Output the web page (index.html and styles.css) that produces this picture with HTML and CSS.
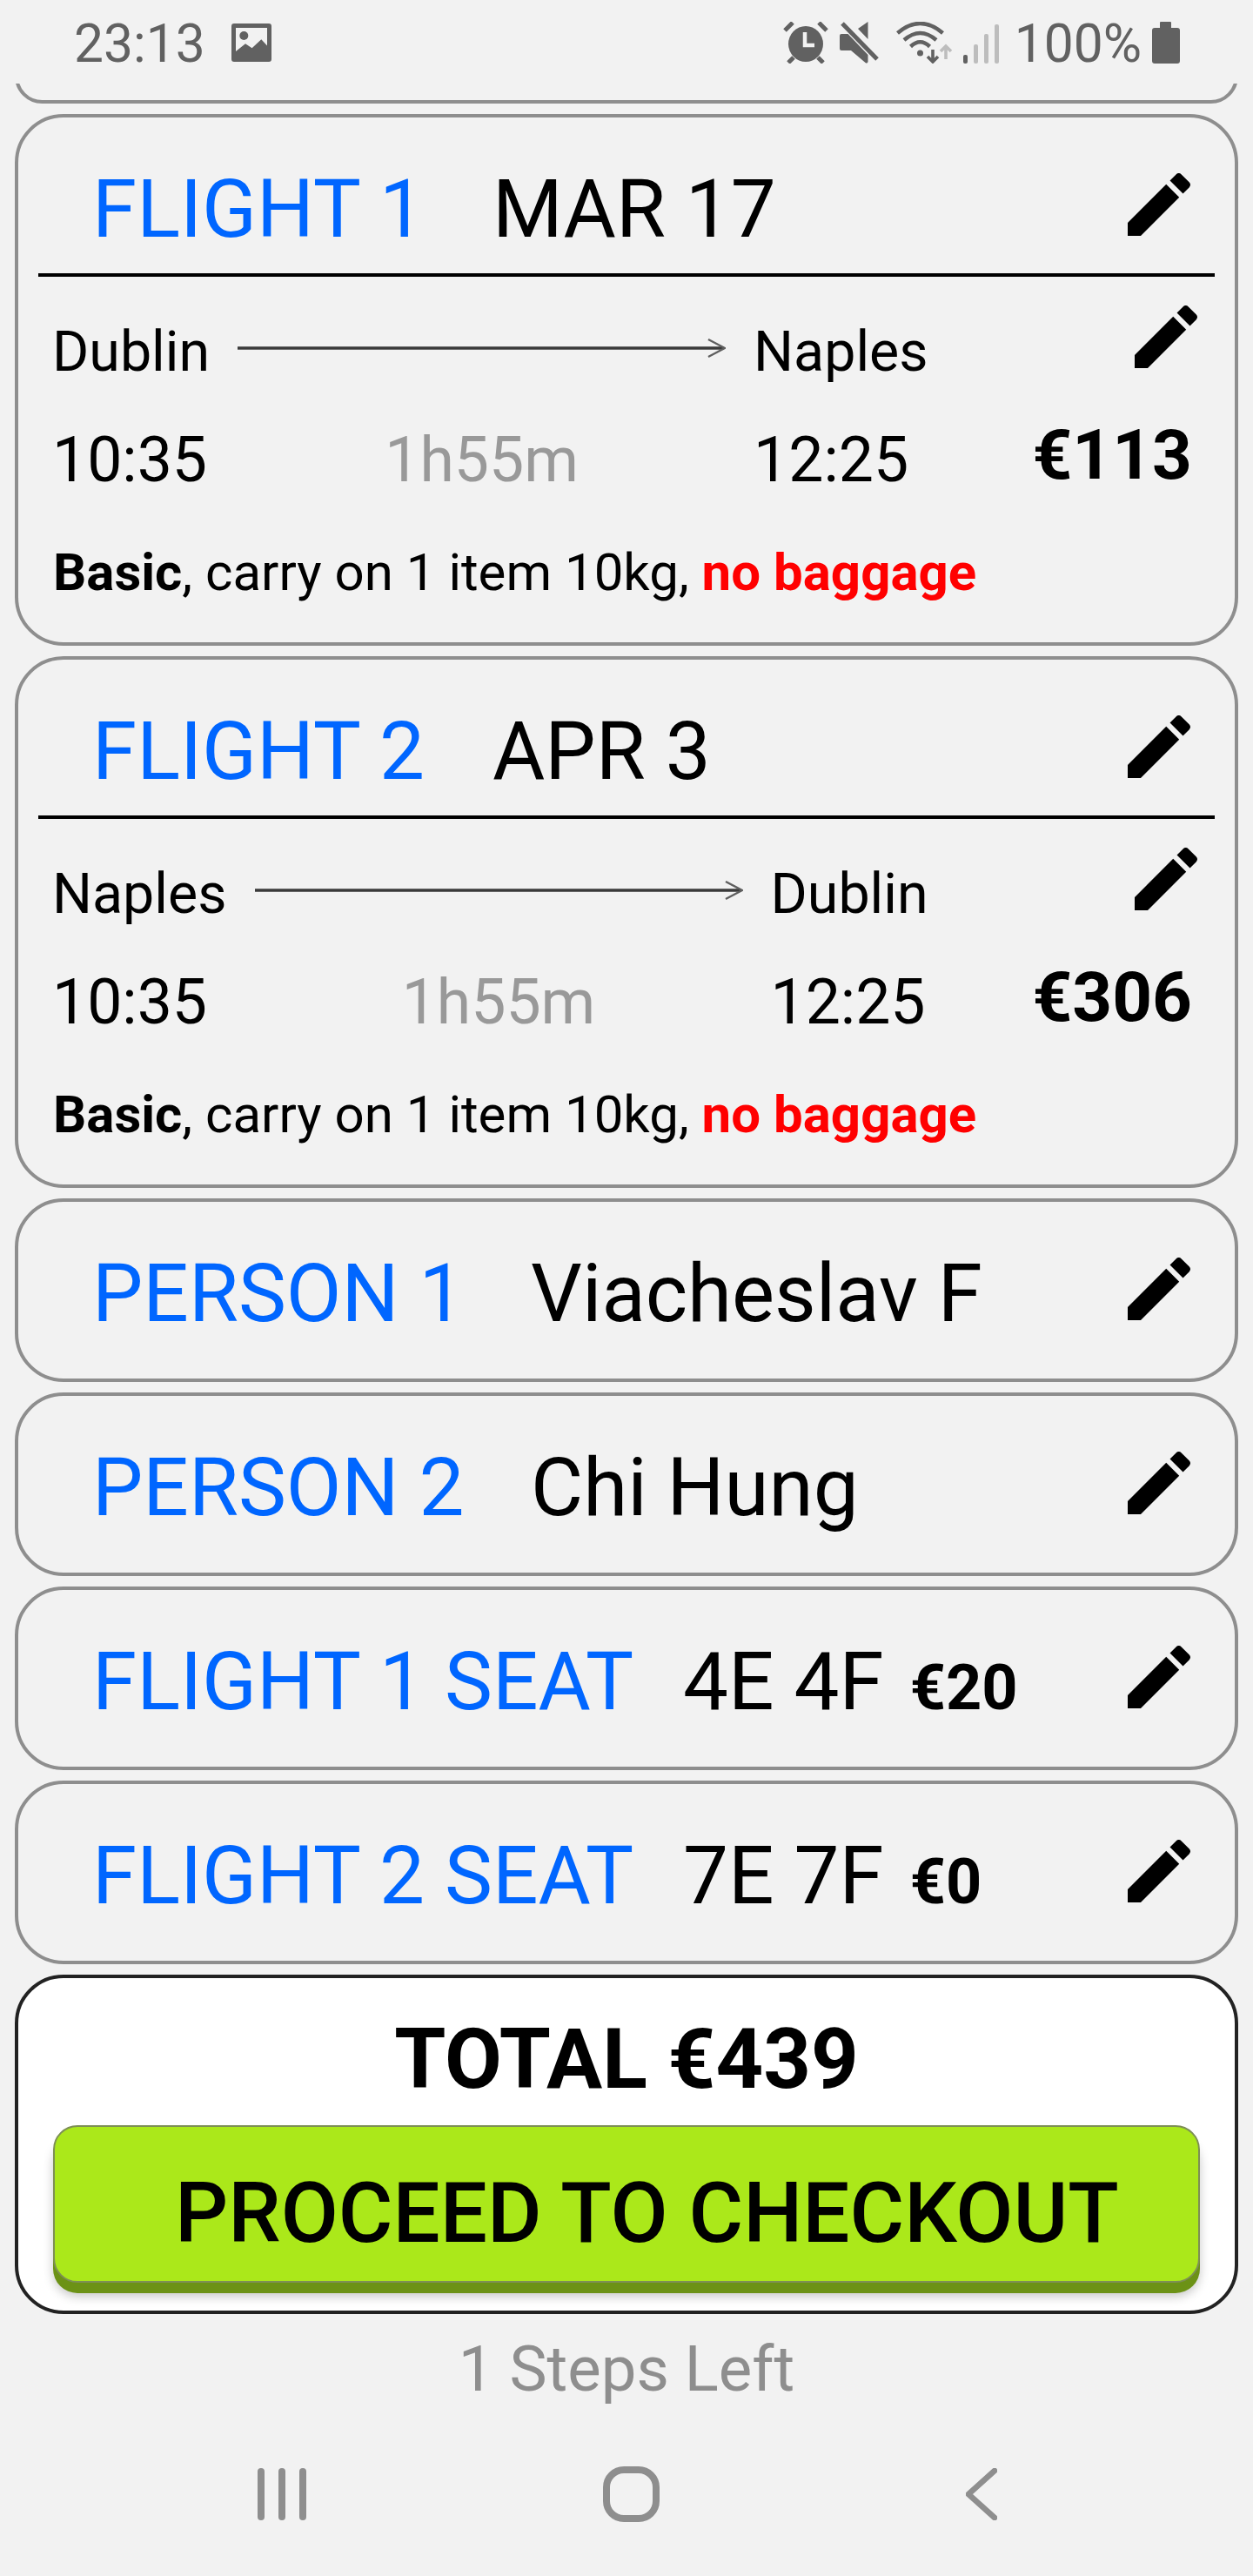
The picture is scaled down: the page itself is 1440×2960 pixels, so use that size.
FILE: index.html
```html
<!DOCTYPE html>
<html lang="en">
<head>
<meta charset="utf-8">
<title>Booking summary</title>
<link rel="stylesheet" href="styles.css">
</head>
<body>
<svg class="sprite" width="0" height="0" aria-hidden="true">
  <symbol id="edit" viewBox="3 3 18 18"><path d="M3 17.25V21h3.75L17.81 9.94l-3.75-3.75L3 17.25zM20.71 7.04c.39-.39.39-1.02 0-1.41l-2.34-2.34c-.39-.39-1.02-.39-1.41 0l-1.83 1.83 3.75 3.75 1.83-1.83z"/></symbol>
  <symbol id="arrow" viewBox="0 0 561 24"><path d="M0 12H559" fill="none" stroke="#3a3a3a" stroke-width="3.6"/><path d="M541 2L560 12L541 22" fill="none" stroke="#5f5f5f" stroke-width="2.4"/></symbol>
</svg>

<header class="status">
  <span class="clock">23:13</span>
  <svg class="ic-image" viewBox="0 0 46 44"><path fill="#616161" fill-rule="evenodd" d="M3 0H43a3 3 0 0 1 3 3V41a3 3 0 0 1-3 3H3a3 3 0 0 1-3-3V3a3 3 0 0 1 3-3zM5 5V32L16 23.300L23.600 28.300L34.300 18.300L41 25.600V5z"/><circle cx="14.300" cy="14" r="5" fill="#616161"/></svg>
  <span class="status-right">
    <svg class="ic-alarm" viewBox="0 0 52 48"><ellipse cx="26" cy="25.5" rx="20" ry="20.5" fill="#616161"/><path d="M25 12V27H36" fill="none" stroke="#f2f2f2" stroke-width="4.5"/><path d="M2 10L11 1M50 10L41 1M6 47L12 41M46 47L40 41" stroke="#616161" stroke-width="5" fill="none"/></svg>
    <svg class="ic-mute" viewBox="0 0 46 48"><path fill="#616161" d="M21 8L32.5 0V20zM0 16a2 2 0 0 1 2-2H9.5L32.5 38V46a2 2 0 0 1-3 1L13 33H2a2 2 0 0 1-2-2z"/><path d="M3 2L43 43" stroke="#616161" stroke-width="5" fill="none"/></svg>
    <svg class="ic-wifi" viewBox="0 0 64 48"><g fill="none" stroke="#616161" stroke-width="4.5"><path d="M1.5 13Q27.5-9 53.5 13"/><path d="M9 21Q27.5 5 46 21"/><path d="M16.500 28.500Q27.500 18 38.500 28.500"/></g><circle cx="27.500" cy="36" r="3.500" fill="#616161"/><path d="M42 32V45M36 40L42 46L48 40" fill="none" stroke="#616161" stroke-width="3.600"/><path d="M57 43V30M51 34L57 28L63 34" fill="none" stroke="#bdbdbd" stroke-width="3.600"/></svg>
    <svg class="ic-signal" viewBox="0 0 41 48"><rect x="0" y="38" width="5" height="10" rx="2" fill="#616161"/><rect x="12" y="26" width="5" height="22" rx="2" fill="#bdbdbd"/><rect x="24" y="14" width="5" height="34" rx="2" fill="#bdbdbd"/><rect x="36" y="3" width="5" height="45" rx="2" fill="#bdbdbd"/></svg>
    <span class="battery-pct">100%</span>
    <svg class="ic-battery" viewBox="0 0 32 48"><path fill="#616161" d="M10 0H21a1 1 0 0 1 1 1V7H29a3 3 0 0 1 3 3V45a3 3 0 0 1-3 3H3a3 3 0 0 1-3-3V10a3 3 0 0 1 3-3H9V1a1 1 0 0 1 1-1z"/></svg>
  </span>
</header>

<main class="list">
  <div class="stub"><div class="stub-card"></div></div>

  <section class="card">
    <div class="row">
      <span class="label w-flight">FLIGHT 1</span>
      <span class="value">MAR 17</span>
      <svg class="pencil"><use href="#edit"/></svg>
    </div>
    <div class="rule"></div>
    <div class="route">
      <span class="city">Dublin</span>
      <svg class="arrow"><use href="#arrow"/></svg>
      <span class="city">Naples</span>
      <svg class="pencil pencil-route"><use href="#edit"/></svg>
      <span class="time">10:35</span>
      <span class="time duration">1h55m</span>
      <span class="time">12:25</span>
      <span class="price">€113</span>
    </div>
    <p class="terms"><b>Basic</b>, carry on 1 item 10kg, <b class="warn">no baggage</b></p>
  </section>

  <section class="card">
    <div class="row">
      <span class="label w-flight">FLIGHT 2</span>
      <span class="value">APR 3</span>
      <svg class="pencil"><use href="#edit"/></svg>
    </div>
    <div class="rule"></div>
    <div class="route">
      <span class="city">Naples</span>
      <svg class="arrow"><use href="#arrow"/></svg>
      <span class="city">Dublin</span>
      <svg class="pencil pencil-route"><use href="#edit"/></svg>
      <span class="time">10:35</span>
      <span class="time duration">1h55m</span>
      <span class="time">12:25</span>
      <span class="price">€306</span>
    </div>
    <p class="terms"><b>Basic</b>, carry on 1 item 10kg, <b class="warn">no baggage</b></p>
  </section>

  <section class="card card-row">
    <div class="row">
      <span class="label w-person">PERSON 1</span>
      <span class="value">Viacheslav F</span>
      <svg class="pencil"><use href="#edit"/></svg>
    </div>
  </section>

  <section class="card card-row">
    <div class="row">
      <span class="label w-person">PERSON 2</span>
      <span class="value">Chi Hung</span>
      <svg class="pencil"><use href="#edit"/></svg>
    </div>
  </section>

  <section class="card card-row">
    <div class="row">
      <span class="label w-seat">FLIGHT 1 SEAT</span>
      <span class="value">4E 4F</span>
      <span class="seat-price">€20</span>
      <svg class="pencil"><use href="#edit"/></svg>
    </div>
  </section>

  <section class="card card-row">
    <div class="row">
      <span class="label w-seat">FLIGHT 2 SEAT</span>
      <span class="value">7E 7F</span>
      <span class="seat-price">€0</span>
      <svg class="pencil"><use href="#edit"/></svg>
    </div>
  </section>

  <section class="card total-card">
    <h2 class="total">TOTAL €439</h2>
    <button class="checkout" type="button">PROCEED TO CHECKOUT</button>
  </section>

  <p class="steps">1 Steps Left</p>
</main>

<nav class="nav">
  <svg class="nav-recent" viewBox="0 0 56 60"><g fill="#8e8e8e"><rect x="0" y="0" width="8" height="60" rx="4"/><rect x="24" y="0" width="8" height="60" rx="4"/><rect x="48" y="0" width="8" height="60" rx="4"/></g></svg>
  <svg class="nav-home" viewBox="0 0 65 64"><rect x="4" y="4" width="57" height="56" rx="20" fill="none" stroke="#8e8e8e" stroke-width="8"/></svg>
  <svg class="nav-back" viewBox="0 0 36 60"><path d="M33 3L3 30L33 57" fill="none" stroke="#8e8e8e" stroke-width="6.500" stroke-linecap="round" stroke-linejoin="round"/></svg>
</nav>
</body>
</html>
```
FILE: styles.css
```css
* { box-sizing: border-box; }

html, body { margin: 0; padding: 0; }

body {
  width: 1440px;
  height: 2960px;
  overflow: hidden;
  background: #f2f2f2;
  color: #000;
  font-family: Roboto, "Liberation Sans", sans-serif;
}

.sprite { position: absolute; }

.status {
  display: flex;
  align-items: flex-start;
  height: 96px;
  padding-left: 85px;
  color: #616161;
}

.clock {
  font-size: 60.5px;
  line-height: 90px;
  margin-top: 6px;
  width: 181px;
}

.ic-image { width: 46px; height: 44px; margin-top: 27px; }

.status-right {
  display: flex;
  align-items: flex-start;
  margin-left: auto;
  padding-right: 84px;
}

.ic-alarm { width: 52px; height: 48px; margin-top: 25px; }
.ic-mute { width: 46px; height: 48px; margin: 25px 0 0 13px; }
.ic-wifi { width: 64px; height: 48px; margin: 25px 0 0 19px; }
.ic-signal { width: 41px; height: 48px; margin: 25px 0 0 13px; }
.ic-battery { width: 32px; height: 48px; margin: 25px 0 0 12px; }

.battery-pct {
  font-size: 60.5px;
  line-height: 90px;
  margin: 6px 0 0 18px;
}

.list {
  display: flex;
  flex-direction: column;
  gap: 12px;
  padding: 0 17px;
}

.stub { height: 23px; overflow: hidden; }

.stub-card {
  height: 63px;
  margin-top: -40px;
  border: 4px solid #8e8e8e;
  border-radius: 56px;
}

.card {
  border: 4px solid #8e8e8e;
  border-radius: 56px;
  background: #f2f2f2;
}

.card-row { height: 211px; }

.row {
  display: flex;
  align-items: baseline;
  height: 156px;
  padding: 56px 51px 0 85px;
  line-height: 100px;
  font-size: 92.5px;
}

.label { color: #0066ff; flex: none; }
.w-flight { width: 460px; }
.w-person { width: 504px; }
.w-seat { width: 679px; }

.value { white-space: nowrap; }

.seat-price {
  margin-left: 30px;
  font-size: 72px;
  font-weight: 700;
}

.pencil {
  width: 72px;
  height: 72px;
  margin-left: auto;
  align-self: flex-start;
  margin-top: 8px;
  fill: #000;
  flex: none;
}

.rule {
  height: 4px;
  margin: 23px 23px 0;
  background: #000;
}

.route {
  display: grid;
  grid-template-columns: auto 561px auto 1fr;
  grid-template-rows: 70px 80px;
  column-gap: 32px;
  row-gap: 50px;
  padding: 51px 43px 0 39px;
}

.city { font-size: 64.5px; line-height: 70px; }

.time { font-size: 71.5px; line-height: 80px; }

.duration { color: #999; justify-self: center; }

.arrow {
  width: 561px;
  height: 24px;
  align-self: center;
  margin-bottom: 8px;
}

.pencil-route {
  justify-self: end;
  margin-top: -18px;
}

.price {
  justify-self: end;
  font-size: 80px;
  font-weight: 700;
  line-height: 80px;
  margin: -6px 6px 0 0;
}

.terms {
  margin: 54px 0 45px;
  padding-left: 40px;
  font-size: 60px;
  line-height: 70px;
}

.warn { color: #f00; }

.total-card {
  height: 390px;
  padding: 43px 40px 0;
  background: #fff;
  border-color: #222;
}

.total {
  margin: 0 0 26px;
  font-size: 95.5px;
  font-weight: 700;
  line-height: 100px;
  text-align: center;
}

.checkout {
  display: block;
  width: 100%;
  height: 181px;
  padding: 20px 0 0 138px;
  border: 2px solid #7d8f55;
  border-radius: 28px;
  background: #abe81a;
  box-shadow: 0 12px 0 #6c9216, 0 16px 12px rgba(0, 0, 0, .22);
  color: #000;
  font: 500 96px/158px Roboto, "Liberation Sans", sans-serif;
  text-align: left;
  white-space: nowrap;
}

.steps {
  margin: 12px 0 0;
  color: #8e8e8e;
  font-size: 72.5px;
  line-height: 80px;
  text-align: center;
}

.nav {
  display: flex;
  align-items: flex-start;
  padding: 73px 0 0 296px;
}

.nav-recent { width: 56px; height: 60px; }
.nav-home { width: 65px; height: 64px; margin: -2px 0 0 341px; }
.nav-back { width: 36px; height: 60px; margin-left: 352px; }
```
